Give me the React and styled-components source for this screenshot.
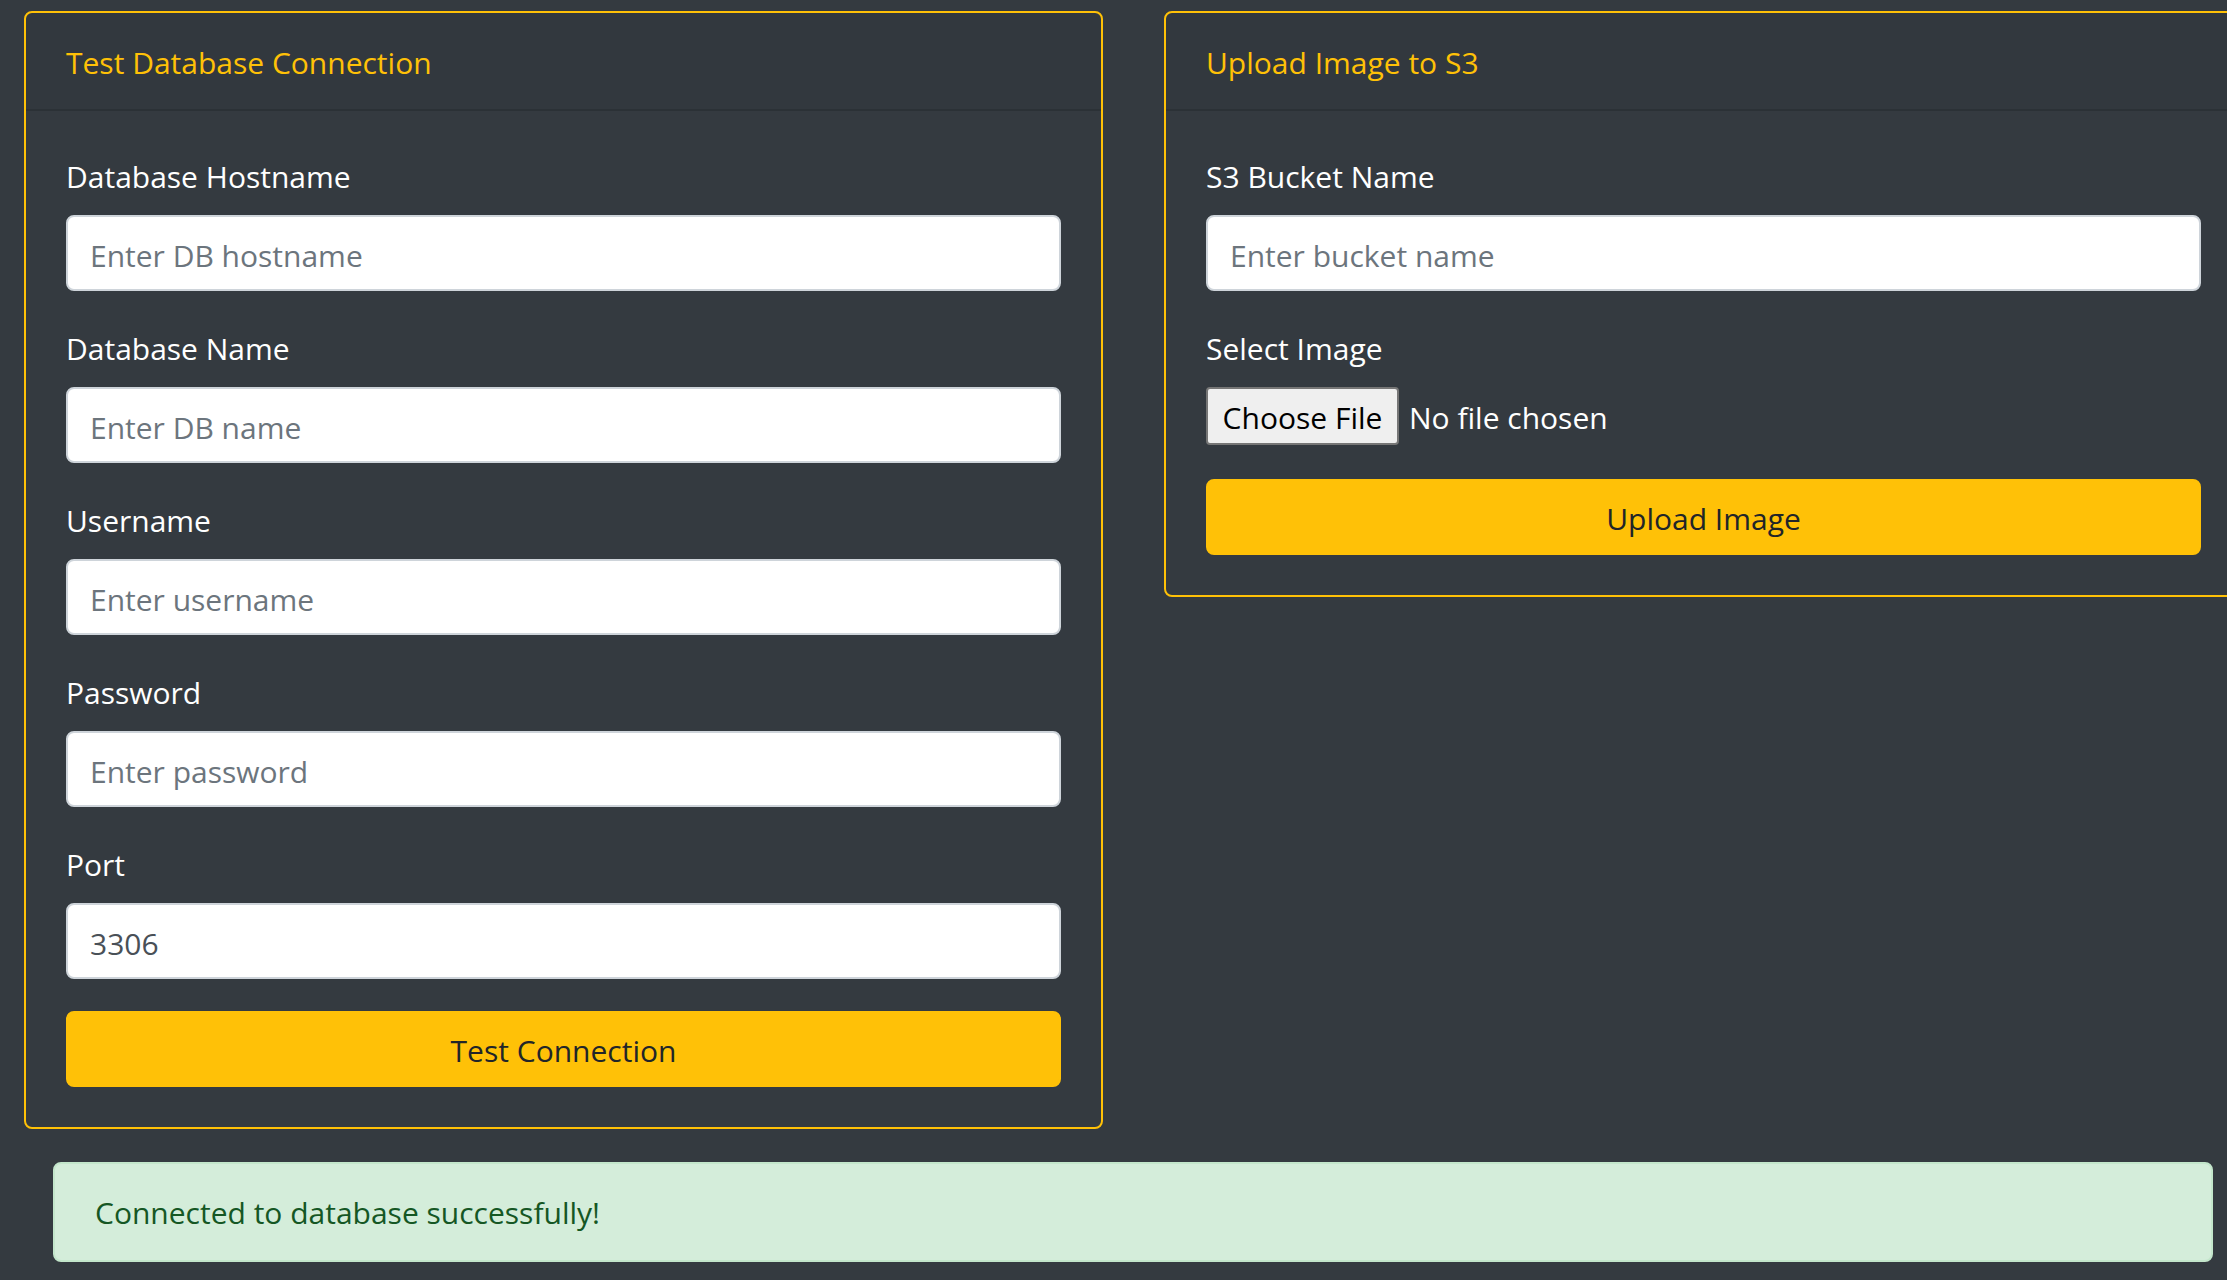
import React from 'react';
import styled, { createGlobalStyle } from 'styled-components';

const Global = createGlobalStyle`
  html, body {
    margin: 0;
    padding: 0;
    background: #343a40;
    overflow: hidden;
  }
  body {
    font-family: "Open Sans", "Noto Sans", sans-serif;
  }
  * { box-sizing: border-box; }
`;

const Page = styled.div`
  width: 2227px;
  height: 1280px;
  padding: 11px 0 0 24px;
  overflow: hidden;
`;

const Row = styled.div`
  display: grid;
  grid-template-columns: 1079px 1079px;
  column-gap: 61px;
  align-items: start;
`;

const Card = styled.section`
  border: 2px solid #ffc107;
  border-radius: 8px;
  background: #343a40;
  overflow: hidden;
`;

const CardHeader = styled.div`
  padding: 26px 40px 22px;
  background: rgba(0, 0, 0, 0.03);
  border-bottom: 2px solid rgba(0, 0, 0, 0.125);
  color: #ffc107;
  font-size: 30px;
  line-height: 48px;
`;

const CardBody = styled.div`
  padding: 40px;
`;

const FormGroup = styled.div`
  margin-bottom: 32px;
`;

const Label = styled.label`
  display: block;
  color: #ffffff;
  font-size: 30px;
  line-height: 48px;
  padding-top: 2px;
  margin-bottom: 14px;
`;

const Input = styled.input`
  display: block;
  width: 100%;
  height: 76px;
  padding: 14px 22px 10px;
  font-family: inherit;
  font-size: 30px;
  line-height: 48px;
  color: #495057;
  background: #ffffff;
  border: 2px solid #ced4da;
  border-radius: 8px;
  outline: none;
  &::placeholder {
    color: #6c757d;
    opacity: 1;
  }
`;

const Button = styled.button`
  display: block;
  width: 100%;
  height: 76px;
  padding: 14px 24px 10px;
  font-family: inherit;
  font-size: 30px;
  line-height: 48px;
  color: #212529;
  background: #ffc107;
  border: 2px solid #ffc107;
  border-radius: 8px;
  cursor: pointer;
`;

const FileRow = styled.label`
  display: flex;
  align-items: center;
  gap: 10px;
  height: 58px;
  margin: 2px 0 34px;
  cursor: pointer;
`;

const HiddenFile = styled.input`
  display: none;
`;

const FileButton = styled.span`
  display: inline-flex;
  align-items: center;
  justify-content: center;
  width: 193px;
  height: 58px;
  padding-top: 3px;
  background: #efefef;
  border: 2px solid #767676;
  border-radius: 4px;
  color: #000000;
  font-size: 30px;
`;

const FileStatus = styled.span`
  color: #ffffff;
  font-size: 30px;
  padding-top: 3px;
`;

const Alert = styled.div`
  width: 2160px;
  margin: 33px 0 0 29px;
  padding: 25px 40px 23px;
  background: #d4edda;
  border: 2px solid #c3e6cb;
  border-radius: 8px;
  color: #155724;
  font-size: 30px;
  line-height: 48px;
`;

const dbFields = [
  { label: 'Database Hostname', placeholder: 'Enter DB hostname', type: 'text' },
  { label: 'Database Name', placeholder: 'Enter DB name', type: 'text' },
  { label: 'Username', placeholder: 'Enter username', type: 'text' },
  { label: 'Password', placeholder: 'Enter password', type: 'password' },
  { label: 'Port', placeholder: 'Enter port', type: 'text', value: '3306' },
];

export default function App() {
  return (
    <>
      <Global />
      <Page>
        <Row>
          <Card>
            <CardHeader>Test Database Connection</CardHeader>
            <CardBody>
              {dbFields.map((f) => (
                <FormGroup key={f.label}>
                  <Label>{f.label}</Label>
                  <Input
                    type={f.type}
                    placeholder={f.placeholder}
                    defaultValue={f.value}
                  />
                </FormGroup>
              ))}
              <Button type="button">Test Connection</Button>
            </CardBody>
          </Card>
          <Card>
            <CardHeader>Upload Image to S3</CardHeader>
            <CardBody>
              <FormGroup>
                <Label>S3 Bucket Name</Label>
                <Input type="text" placeholder="Enter bucket name" />
              </FormGroup>
              <Label>Select Image</Label>
              <FileRow>
                <HiddenFile type="file" />
                <FileButton>Choose File</FileButton>
                <FileStatus>No file chosen</FileStatus>
              </FileRow>
              <Button type="button">Upload Image</Button>
            </CardBody>
          </Card>
        </Row>
        <Alert>Connected to database successfully!</Alert>
      </Page>
    </>
  );
}
